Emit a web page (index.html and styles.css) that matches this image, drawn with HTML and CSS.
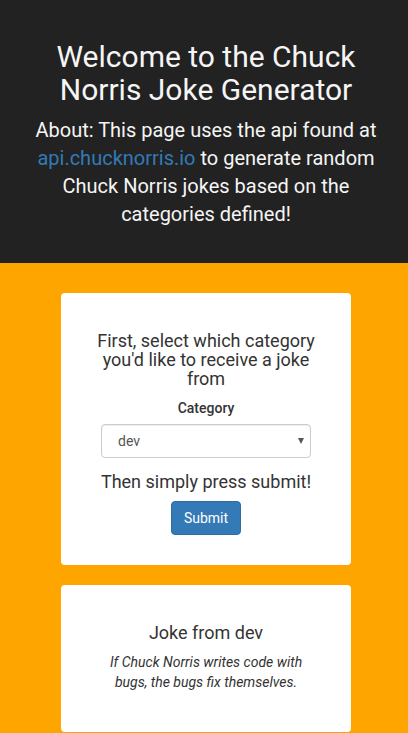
FILE: index.html
```html
<!DOCTYPE html>
<html lang="en">
<head>
<meta charset="utf-8">
<meta name="viewport" content="width=device-width, initial-scale=1">
<title>Chuck Norris Joke Generator</title>
<link rel="stylesheet" href="styles.css">
</head>
<body>
<header class="intro">
  <h2 class="intro-title">Welcome to the Chuck Norris Joke Generator</h2>
  <p class="intro-text">About: This page uses the api found at <a href="#">api.chucknorris.io</a> to generate random Chuck Norris jokes based on the categories defined!</p>
</header>
<main class="content">
  <form class="card">
    <h4 class="card-title">First, select which category you'd like to receive a joke from</h4>
    <div class="field">
      <label for="category">Category</label>
      <div class="select-wrap">
        <select id="category" class="select">
          <option>dev</option>
        </select>
        <svg class="arrow" width="6" height="6" viewBox="0 0 6 6" aria-hidden="true"><path d="M0 0h6L3 6z" fill="#555"/></svg>
      </div>
    </div>
    <h4 class="card-title">Then simply press submit!</h4>
    <button class="submit" type="button">Submit</button>
  </form>
  <section class="card">
    <h4 class="card-title">Joke from dev</h4>
    <p class="joke">If Chuck Norris writes code with bugs, the bugs fix themselves.</p>
  </section>
</main>
</body>
</html>
```

FILE: styles.css
```css
* {
  box-sizing: border-box;
}

body {
  margin: 0;
  background: #ffa500;
  color: #333;
  font: 14px/20px Roboto, sans-serif;
  text-align: center;
}

.intro {
  padding: 40px 28px 35px 32px;
  background: #222;
  color: #f5f5f5;
}

.intro-title {
  margin: 0 0 10px;
  font-size: 30px;
  font-weight: 400;
  line-height: 33px;
}

.intro-text {
  margin: 0;
  font-size: 20px;
  font-weight: 400;
  line-height: 28px;
}

.intro a {
  color: #337ab7;
  text-decoration: none;
}

.content {
  display: grid;
  gap: 20px;
  padding: 30px 57px 20px 61px;
}

.card {
  padding: 28px 30px 30px;
  border-radius: 4px;
  background: #fff;
}

.card-title {
  margin: 10px 0;
  font-size: 18px;
  font-weight: 400;
  line-height: 19px;
}

.field {
  margin: 0 10px 14px;
}

.field label {
  display: block;
  margin-bottom: 6px;
  font-weight: 500;
}

.select-wrap {
  position: relative;
}

.select {
  display: block;
  width: 100%;
  height: 34px;
  padding: 6px 16px;
  border: 1px solid #ccc;
  border-radius: 4px;
  background: #fff;
  box-shadow: inset 0 1px 1px rgba(0, 0, 0, 0.075);
  color: #555;
  font: inherit;
  appearance: none;
}

.arrow {
  position: absolute;
  top: 14px;
  right: 7px;
  pointer-events: none;
}

.submit {
  padding: 6px 12px;
  border: 1px solid #2e6da4;
  border-radius: 4px;
  background: #337ab7;
  color: #fff;
  font: inherit;
}

.joke {
  margin: 0 10px 10px;
  font-style: italic;
}
```
